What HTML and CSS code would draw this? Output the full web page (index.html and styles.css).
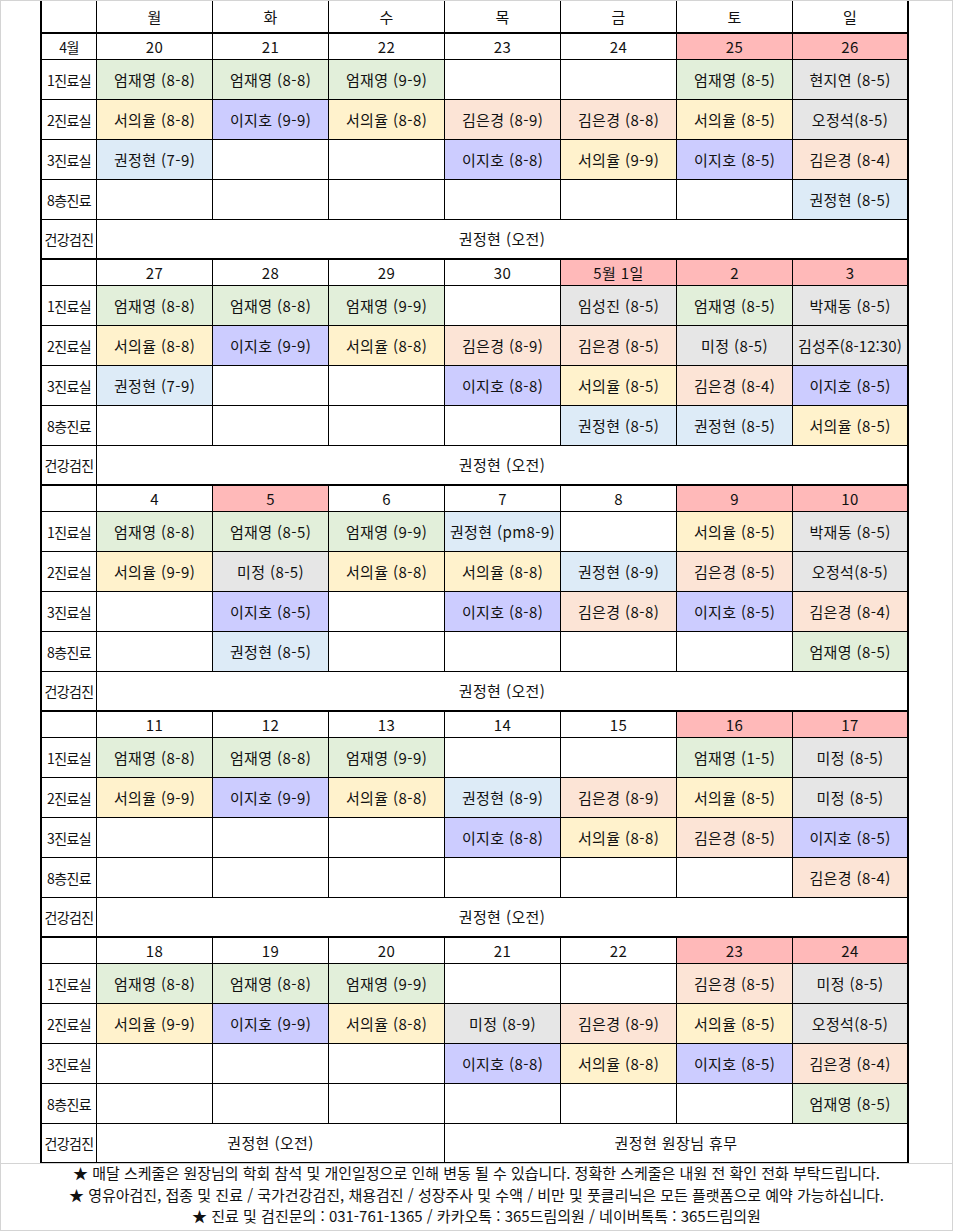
FILE: index.html
```html
<!DOCTYPE html>
<html lang="ko">
<head>
<meta charset="utf-8">
<title>진료 스케줄</title>
<link rel="stylesheet" href="styles.css">
</head>
<body>
<div class="frame">
<table class="sched">
<tr class="dow">
<td class="lbl w-lbl"></td><td class="w-day">월</td><td class="w-day">화</td><td class="w-day">수</td><td class="w-day">목</td><td class="w-day">금</td><td class="w-day">토</td><td class="w-last">일</td>
</tr>

<tr class="date">
<td class="lbl">4월</td><td>20</td><td>21</td><td>22</td><td>23</td><td>24</td><td class="r">25</td><td class="r">26</td>
</tr>
<tr class="room">
<td class="lbl">1진료실</td><td class="g">엄재영 (8-8)</td><td class="g">엄재영 (8-8)</td><td class="g">엄재영 (9-9)</td><td></td><td></td><td class="g">엄재영 (8-5)</td><td class="k">현지연 (8-5)</td>
</tr>
<tr class="room">
<td class="lbl">2진료실</td><td class="y">서의율 (8-8)</td><td class="p">이지호 (9-9)</td><td class="y">서의율 (8-8)</td><td class="o">김은경 (8-9)</td><td class="o">김은경 (8-8)</td><td class="y">서의율 (8-5)</td><td class="k">오정석(8-5)</td>
</tr>
<tr class="room">
<td class="lbl">3진료실</td><td class="b">권정현 (7-9)</td><td></td><td></td><td class="p">이지호 (8-8)</td><td class="y">서의율 (9-9)</td><td class="p">이지호 (8-5)</td><td class="o">김은경 (8-4)</td>
</tr>
<tr class="room">
<td class="lbl">8층진료</td><td></td><td></td><td></td><td></td><td></td><td></td><td class="b">권정현 (8-5)</td>
</tr>
<tr class="check">
<td class="lbl">건강검진</td><td colspan="7">권정현 (오전)</td>
</tr>

<tr class="date">
<td class="lbl"></td><td>27</td><td>28</td><td>29</td><td>30</td><td class="r">5월 1일</td><td class="r">2</td><td class="r">3</td>
</tr>
<tr class="room">
<td class="lbl">1진료실</td><td class="g">엄재영 (8-8)</td><td class="g">엄재영 (8-8)</td><td class="g">엄재영 (9-9)</td><td></td><td class="k">임성진 (8-5)</td><td class="g">엄재영 (8-5)</td><td class="k">박재동 (8-5)</td>
</tr>
<tr class="room">
<td class="lbl">2진료실</td><td class="y">서의율 (8-8)</td><td class="p">이지호 (9-9)</td><td class="y">서의율 (8-8)</td><td class="o">김은경 (8-9)</td><td class="o">김은경 (8-5)</td><td class="k">미정 (8-5)</td><td class="k tight">김성주(8-12:30)</td>
</tr>
<tr class="room">
<td class="lbl">3진료실</td><td class="b">권정현 (7-9)</td><td></td><td></td><td class="p">이지호 (8-8)</td><td class="y">서의율 (8-5)</td><td class="o">김은경 (8-4)</td><td class="p">이지호 (8-5)</td>
</tr>
<tr class="room">
<td class="lbl">8층진료</td><td></td><td></td><td></td><td></td><td class="b">권정현 (8-5)</td><td class="b">권정현 (8-5)</td><td class="y">서의율 (8-5)</td>
</tr>
<tr class="check">
<td class="lbl">건강검진</td><td colspan="7">권정현 (오전)</td>
</tr>

<tr class="date">
<td class="lbl"></td><td>4</td><td class="r">5</td><td>6</td><td>7</td><td>8</td><td class="r">9</td><td class="r">10</td>
</tr>
<tr class="room">
<td class="lbl">1진료실</td><td class="g">엄재영 (8-8)</td><td class="g">엄재영 (8-5)</td><td class="g">엄재영 (9-9)</td><td class="b">권정현 (pm8-9)</td><td></td><td class="y">서의율 (8-5)</td><td class="k">박재동 (8-5)</td>
</tr>
<tr class="room">
<td class="lbl">2진료실</td><td class="y">서의율 (9-9)</td><td class="k">미정 (8-5)</td><td class="y">서의율 (8-8)</td><td class="y">서의율 (8-8)</td><td class="b">권정현 (8-9)</td><td class="o">김은경 (8-5)</td><td class="k">오정석(8-5)</td>
</tr>
<tr class="room">
<td class="lbl">3진료실</td><td></td><td class="p">이지호 (8-5)</td><td></td><td class="p">이지호 (8-8)</td><td class="o">김은경 (8-8)</td><td class="p">이지호 (8-5)</td><td class="o">김은경 (8-4)</td>
</tr>
<tr class="room">
<td class="lbl">8층진료</td><td></td><td class="b">권정현 (8-5)</td><td></td><td></td><td></td><td></td><td class="g">엄재영 (8-5)</td>
</tr>
<tr class="check">
<td class="lbl">건강검진</td><td colspan="7">권정현 (오전)</td>
</tr>

<tr class="date">
<td class="lbl"></td><td>11</td><td>12</td><td>13</td><td>14</td><td>15</td><td class="r">16</td><td class="r">17</td>
</tr>
<tr class="room">
<td class="lbl">1진료실</td><td class="g">엄재영 (8-8)</td><td class="g">엄재영 (8-8)</td><td class="g">엄재영 (9-9)</td><td></td><td></td><td class="g">엄재영 (1-5)</td><td class="k">미정 (8-5)</td>
</tr>
<tr class="room">
<td class="lbl">2진료실</td><td class="y">서의율 (9-9)</td><td class="p">이지호 (9-9)</td><td class="y">서의율 (8-8)</td><td class="b">권정현 (8-9)</td><td class="o">김은경 (8-9)</td><td class="y">서의율 (8-5)</td><td class="k">미정 (8-5)</td>
</tr>
<tr class="room">
<td class="lbl">3진료실</td><td></td><td></td><td></td><td class="p">이지호 (8-8)</td><td class="y">서의율 (8-8)</td><td class="o">김은경 (8-5)</td><td class="p">이지호 (8-5)</td>
</tr>
<tr class="room">
<td class="lbl">8층진료</td><td></td><td></td><td></td><td></td><td></td><td></td><td class="o">김은경 (8-4)</td>
</tr>
<tr class="check">
<td class="lbl">건강검진</td><td colspan="7">권정현 (오전)</td>
</tr>

<tr class="date">
<td class="lbl"></td><td>18</td><td>19</td><td>20</td><td>21</td><td>22</td><td class="r">23</td><td class="r">24</td>
</tr>
<tr class="room">
<td class="lbl">1진료실</td><td class="g">엄재영 (8-8)</td><td class="g">엄재영 (8-8)</td><td class="g">엄재영 (9-9)</td><td></td><td></td><td class="o">김은경 (8-5)</td><td class="k">미정 (8-5)</td>
</tr>
<tr class="room">
<td class="lbl">2진료실</td><td class="y">서의율 (9-9)</td><td class="p">이지호 (9-9)</td><td class="y">서의율 (8-8)</td><td class="k">미정 (8-9)</td><td class="o">김은경 (8-9)</td><td class="y">서의율 (8-5)</td><td class="k">오정석(8-5)</td>
</tr>
<tr class="room">
<td class="lbl">3진료실</td><td></td><td></td><td></td><td class="p">이지호 (8-8)</td><td class="y">서의율 (8-8)</td><td class="p">이지호 (8-5)</td><td class="o">김은경 (8-4)</td>
</tr>
<tr class="room">
<td class="lbl">8층진료</td><td></td><td></td><td></td><td></td><td></td><td></td><td class="g">엄재영 (8-5)</td>
</tr>
<tr class="check">
<td class="lbl">건강검진</td><td colspan="3">권정현 (오전)</td><td colspan="4">권정현 원장님 휴무</td>
</tr>
</table>
<div class="notes">
<p>★ 매달 스케줄은 원장님의 학회 참석 및 개인일정으로 인해 변동 될 수 있습니다. 정확한 스케줄은 내원 전 확인 전화 부탁드립니다.</p>
<p>★ 영유아검진, 접종 및 진료 / 국가건강검진, 채용검진 / 성장주사 및 수액 / 비만 및 풋클리닉은 모든 플랫폼으로 예약 가능하십니다.</p>
<p>★ 진료 및 검진문의 : 031-761-1365 / 카카오톡 : 365드림의원 / 네이버톡톡 : 365드림의원</p>
</div>
</div>
</body>
</html>
```
FILE: styles.css
```css
html, body {
  margin: 0;
  padding: 0;
  background: #fff;
}

body {
  font-family: "Noto Sans CJK KR", "Noto Sans", sans-serif;
  color: #111;
}

.frame {
  width: 951px;
  height: 1229px;
  border: 1px solid #d4d4d4;
  overflow: hidden;
}

.sched {
  margin-left: 39px;
  width: 869px;
  table-layout: fixed;
  border-collapse: separate;
  border-spacing: 0;
  border-left: 2px solid #000;
  border-right: 2px solid #000;
}

.sched td {
  box-sizing: border-box;
  padding: 0;
  border-right: 1px solid #000;
  border-bottom: 1px solid #000;
  text-align: center;
  vertical-align: middle;
  font-size: 15px;
  line-height: 18px;
  letter-spacing: 0.4px;
  white-space: nowrap;
  overflow: visible;
}

.sched td:last-child {
  border-right: none;
}

.w-lbl { width: 55px; }
.w-day { width: 116px; }
.w-last { width: 114px; }

.dow td {
  height: 33px;
  border-bottom-width: 2px;
}

.date td { height: 26px; }
.room td { height: 40px; }
.check td {
  height: 40px;
  border-bottom-width: 2px;
}

.sched td.lbl {
  font-size: 14px;
  letter-spacing: -0.6px;
}

.sched td.tight { letter-spacing: 0.1px; }

.g { background: #e2efda; }
.y { background: #fff2cc; }
.p { background: #ccccff; }
.o { background: #fce4d6; }
.b { background: #ddebf7; }
.k { background: #e6e6e6; }
.r { background: #ffb9b9; }

.notes {
  border-top: 1px solid #d4d4d4;
  text-align: center;
  font-size: 15px;
  line-height: 21.5px;
  margin-top: -1px;
}

.notes p {
  margin: 0;
  white-space: nowrap;
  position: relative;
  top: -2px;
}
```
